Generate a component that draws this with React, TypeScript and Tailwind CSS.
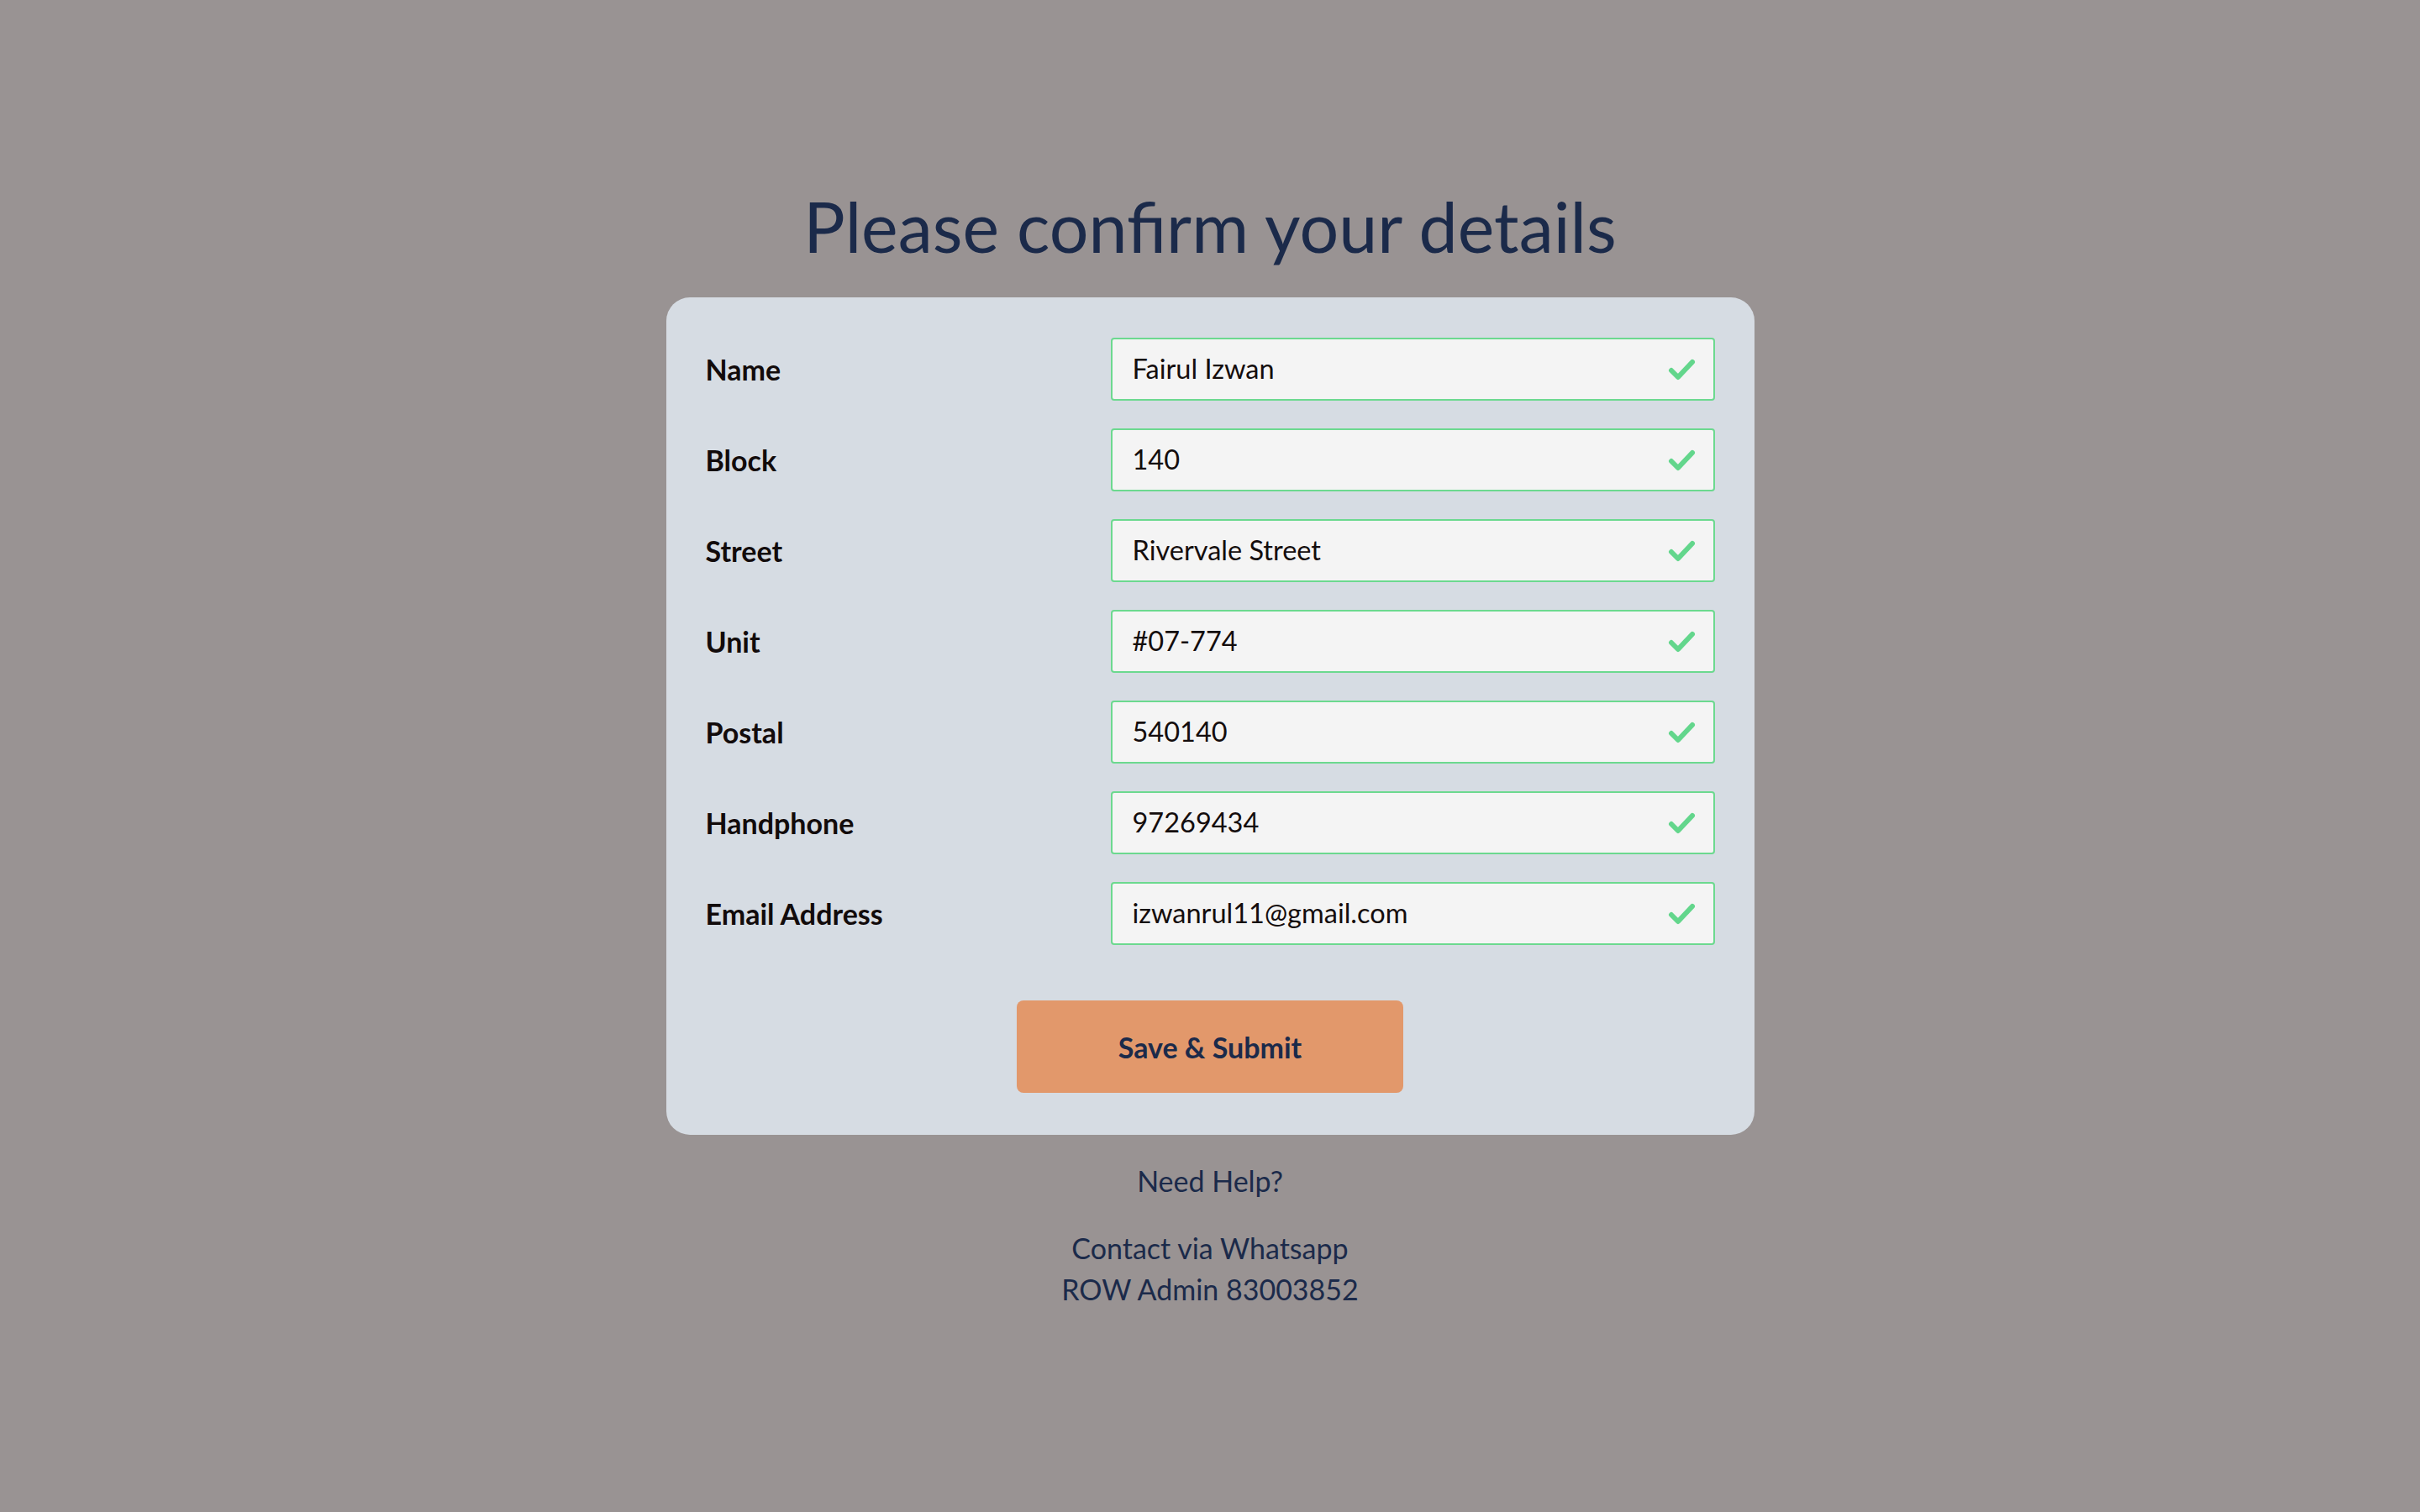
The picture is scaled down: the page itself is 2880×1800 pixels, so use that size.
import React from 'react';

// ─── Data ────────────────────────────────────────────────────────────

const fields = [
    { label: 'Name', value: 'Fairul Izwan' },
    { label: 'Block', value: '140' },
    { label: 'Street', value: 'Rivervale Street' },
    { label: 'Unit', value: '#07-774' },
    { label: 'Postal', value: '540140' },
    { label: 'Handphone', value: '97269434' },
    { label: 'Email Address', value: 'izwanrul11@gmail.com' },
];

const body = { fontFamily: 'Lato, "Open Sans", sans-serif' };

// ─── Check icon ──────────────────────────────────────────────────────

function Check() {
    return (
        <svg width="34" height="28" viewBox="0 0 34 28" fill="none">
            <polyline
                points="4,15 12,23 29,5"
                stroke="#63d68c"
                strokeWidth="6"
                strokeLinecap="round"
                strokeLinejoin="round"
            />
        </svg>
    );
}

// ─── Field row ───────────────────────────────────────────────────────

function FieldRow({ label, value }: { label: string; value: string }) {
    return (
        <div className="flex items-center justify-between">
            <span className="text-[34px] font-bold text-[#120b0b]" style={body}>
                {label}
            </span>
            <div className="flex h-[75px] w-[719px] items-center justify-between rounded-[4px] border-2 border-[#6cd98f] bg-[#f4f4f4] pl-[24px] pr-[20px]">
                <span className="text-[32.5px] text-[#140d0d]" style={body}>
                    {value}
                </span>
                <Check />
            </div>
        </div>
    );
}

// ─── Page ────────────────────────────────────────────────────────────

export default function App() {
    return (
        <div className="flex min-h-screen flex-col items-center bg-[#999393] pt-[220px]">
            <h1
                className="text-[82.5px] leading-[1.2] text-[#1b2a4a]"
                style={{ fontFamily: 'Lato, "Noto Sans", sans-serif' }}
            >
                Please confirm your details
            </h1>

            <div className="mt-[35px] w-[1295px] rounded-[28px] bg-[#d6dce3] px-[47px] pt-[48px] pb-[50px]">
                <div className="flex flex-col gap-[33px]">
                    {fields.map((f) => (
                        <FieldRow key={f.label} label={f.label} value={f.value} />
                    ))}
                </div>
                <div className="mt-[66px] flex justify-center">
                    <button
                        type="button"
                        className="h-[110px] w-[460px] rounded-[8px] bg-[#e2986b] text-[34px] font-bold text-[#1b2a4a]"
                        style={body}
                    >
                        Save &amp; Submit
                    </button>
                </div>
            </div>

            {/* ── Help ── */}
            <div className="mt-[30px] text-center text-[34px] text-[#1b2a4a]" style={body}>
                <p className="leading-[50px]">Need Help?</p>
                <p className="mt-[30px] leading-[50px]">Contact via Whatsapp</p>
                <p className="leading-[48px]">ROW Admin 83003852</p>
            </div>
        </div>
    );
}
